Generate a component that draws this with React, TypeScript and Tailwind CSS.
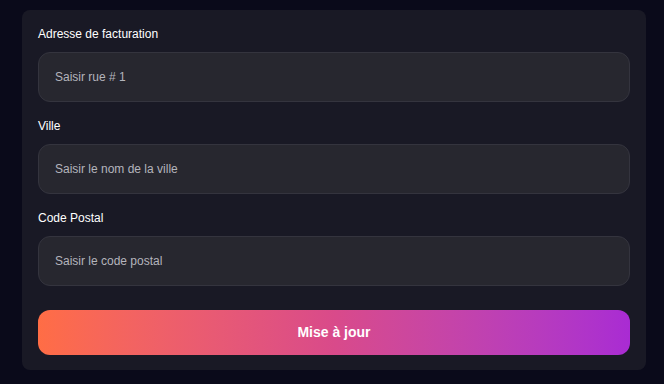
import React, { useState } from 'react';

const fields = [
  { id: 'address', label: 'Adresse de facturation', placeholder: 'Saisir rue # 1' },
  { id: 'city', label: 'Ville', placeholder: 'Saisir le nom de la ville' },
  { id: 'zip', label: 'Code Postal', placeholder: 'Saisir le code postal' },
];

const App: React.FC = () => {
  const [values, setValues] = useState<Record<string, string>>({});

  return (
    <div className="min-h-screen w-full bg-[#0a0a1a] pl-[22px] pr-[18px] pt-[10px] font-['Liberation_Sans',Arial,sans-serif]">
      <form
        className="flex flex-col rounded-lg bg-[#191925] px-4 pt-4 pb-[15px]"
        onSubmit={(e) => e.preventDefault()}
      >
        {fields.map((f) => (
          <div key={f.id} className="mb-4 flex flex-col">
            <label htmlFor={f.id} className="mb-[10px] text-[12px] leading-4 font-medium text-white">
              {f.label}
            </label>
            <input
              id={f.id}
              value={values[f.id] || ''}
              onChange={(e) => setValues({ ...values, [f.id]: e.target.value })}
              placeholder={f.placeholder}
              className="h-[50px] rounded-xl border border-[#34343e] bg-[#27272f] px-4 text-[12px] text-white placeholder:text-[#b4b4bc] outline-none"
            />
          </div>
        ))}
        <button
          type="submit"
          className="mt-2 h-[45px] rounded-xl bg-gradient-to-r from-[#ff6d45] via-[#d94a8a] to-[#a92bd3] text-[14px] font-bold text-white"
        >
          Mise à jour
        </button>
      </form>
    </div>
  );
};

export default App;
